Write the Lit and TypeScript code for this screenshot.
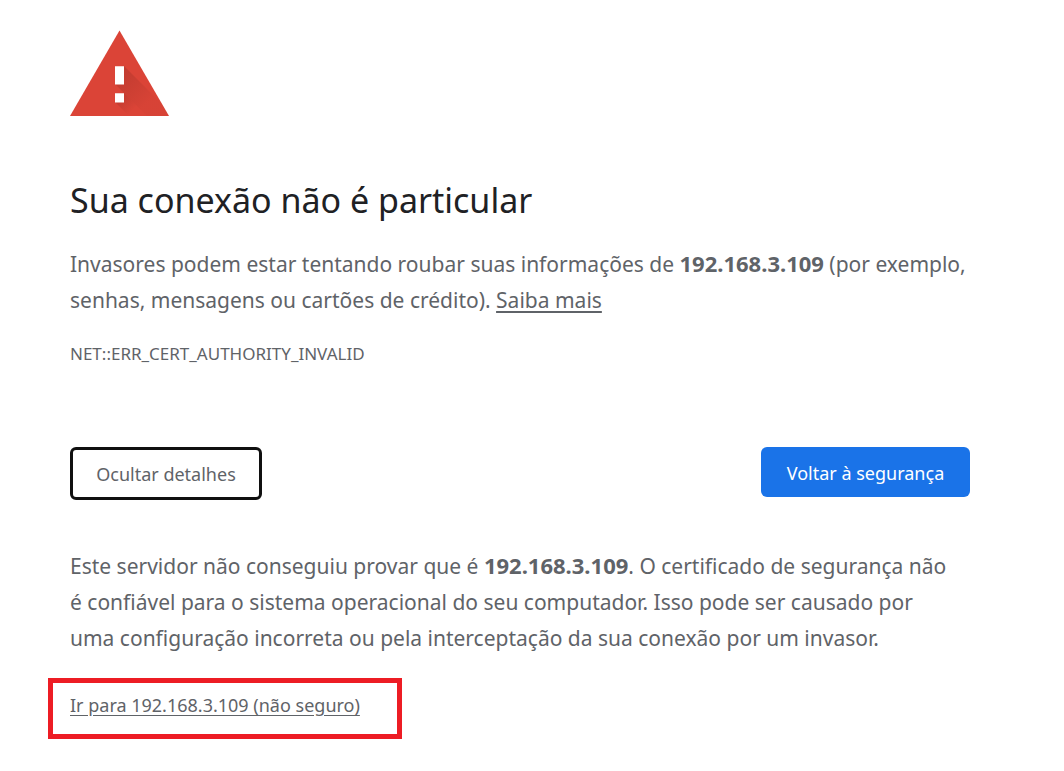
import { LitElement, html, css } from "lit";
import { customElement, state } from "lit/decorators.js";

@customElement("app-root")
export class AppRoot extends LitElement {
  static styles = css`
    :host {
      display: block;
      box-sizing: border-box;
      min-height: 100vh;
      padding: 30px 94px 32px 70px;
      background: #fff;
      color: #5f6368;
      font-family: "Noto Sans", "Open Sans", sans-serif;
      font-size: 21px;
      line-height: 36px;
    }
    *, *::before { box-sizing: border-box; }
    .icon { display: block; width: 99px; height: 87px; }
    h1 { margin: 59px 0 0; color: #202124; font-size: 34px; font-weight: 400; line-height: 48px; }
    p { margin: 0; }
    a { color: inherit; text-underline-offset: 3px; }
    strong { font-size: 22px; line-height: 24px; }
    .lead { margin-top: 22px; }
    .code { margin-top: 24px; font-size: 17px; line-height: 24px; }
    .actions { display: flex; justify-content: space-between; align-items: flex-start; margin-top: 81px; }
    button { font: inherit; font-size: 18px; line-height: 24px; border-radius: 6px; cursor: pointer; white-space: nowrap; }
    .details-button { min-width: 192px; padding: 12px 20px 11px; border: 3px solid #101010; background: #fff; color: #5f6368; }
    .safe-button { min-width: 209px; padding: 14px 20px 12px; border: 0; background: #1a73e8; color: #fff; }
    .explanation { margin-top: 48px; padding-right: 16px; }
    .proceed { display: inline-block; min-width: 354px; margin: 22px 0 0 -22px; padding: 10px 17px 16px; border: 5px solid #ed1c24; font-size: 18px; line-height: 25px; }
  `;

  @state() private open = true;

  render() {
    return html`
      <main>
        <svg class="icon" viewBox="0 0 99 87" aria-hidden="true">
          <defs>
            <linearGradient id="shade" gradientUnits="userSpaceOnUse" x1="48" y1="42" x2="78" y2="72">
              <stop offset="0" stop-color="#8e2b22" stop-opacity=".34" />
              <stop offset="1" stop-color="#8e2b22" stop-opacity=".05" />
            </linearGradient>
            <linearGradient id="shade-dot" gradientUnits="userSpaceOnUse" x1="48" y1="67" x2="62" y2="81">
              <stop offset="0" stop-color="#8e2b22" stop-opacity=".35" />
              <stop offset="1" stop-color="#8e2b22" stop-opacity="0" />
            </linearGradient>
          </defs>
          <path d="M49.500.5 99 86H0Z" fill="#db4437" />
          <path d="M54 36 92 74 99 86H77L45 54Z" fill="url(#shade)" />
          <path d="M54 63 77 86H59L45 72Z" fill="url(#shade-dot)" />
          <path d="M45 36.300h9v18.200h-9zM45 63.300h9v9.200h-9z" fill="#fff" />
        </svg>
        <h1>Sua conexão não é particular</h1>
        <p class="lead">Invasores podem estar tentando roubar suas informações de <strong>192.168.3.109</strong> (por exemplo, senhas, mensagens ou cartões de crédito). <a href="#">Saiba mais</a></p>
        <p class="code">NET::ERR_CERT_AUTHORITY_INVALID</p>
        <div class="actions">
          <button class="details-button" aria-expanded=${this.open} @click=${() => (this.open = !this.open)}>${this.open ? "Ocultar detalhes" : "Avançado"}</button>
          <button class="safe-button">Voltar à segurança</button>
        </div>
        ${this.open ? html`
          <p class="explanation">Este servidor não conseguiu provar que é <strong>192.168.3.109</strong>. O certificado de segurança não é confiável para o sistema operacional do seu computador. Isso pode ser causado por uma configuração incorreta ou pela interceptação da sua conexão por um invasor.</p>
          <div class="proceed"><a href="#">Ir para 192.168.3.109 (não seguro)</a></div>` : ""}
      </main>`;
  }
}
